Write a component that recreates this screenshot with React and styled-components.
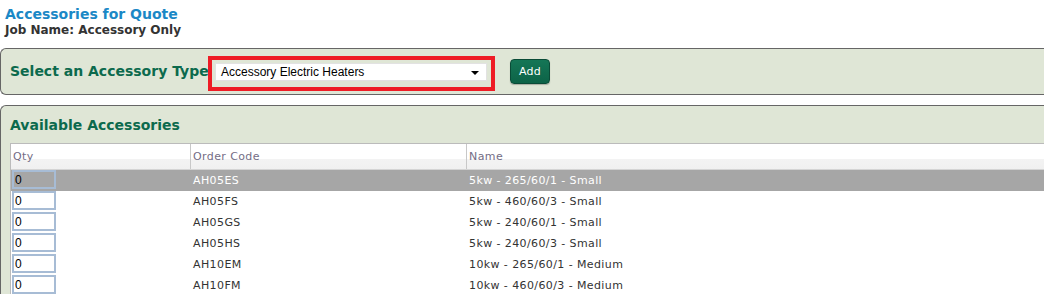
import React from "react";
import styled, { createGlobalStyle } from "styled-components";

const Global = createGlobalStyle`
  html, body { margin: 0; padding: 0; background: #fff; overflow: hidden; }
  body { font-family: "DejaVu Sans", Verdana, sans-serif; }
`;

const Page = styled.div`
  width: 1044px;
  height: 294px;
  overflow: hidden;
  padding-top: 6px;
  box-sizing: border-box;
`;

const Title = styled.h1`
  margin: 0;
  padding-left: 5px;
  font-size: 14px;
  line-height: 17px;
  font-weight: bold;
  color: #1b88c6;
`;

const SubTitle = styled.div`
  padding-left: 5px;
  font-size: 12px;
  line-height: 15px;
  font-weight: bold;
  color: #333;
`;

const Panel = styled.section`
  width: 1070px;
  background: #dfe6d6;
  border-top: 1px solid #666;
  border-bottom: 1px solid #666;
  border-left: 1px solid #666;
  border-radius: 6px 0 0 6px;
  box-sizing: border-box;
  margin-top: ${(p) => p.$mt || "0px"};
`;

const TypeBar = styled.div`
  display: flex;
  align-items: center;
  height: 45px;
  padding-left: 9px;
`;

const Heading = styled.h2`
  margin: 0;
  font-size: 14px;
  line-height: 17px;
  font-weight: bold;
  color: #0c6a4d;
  white-space: nowrap;
`;

const TypeLabel = styled(Heading)`
  flex: 0 0 198px;
  min-width: 0;
  overflow: visible;
`;

const Highlight = styled.div`
  position: relative;
  margin-top: 4px;
  border: 4px solid #ee1c25;
  padding: 3px 4px 6px 3px;
  width: 272px;
  background: #dfe6d6;
`;

const SelectBox = styled.div`
  display: flex;
  align-items: center;
  justify-content: space-between;
  height: 18px;
  background: #fff;
  border: 1px solid #e2e2e2;
  box-sizing: border-box;
  padding: 0 7px 0 5px;
  font-family: "Liberation Sans", Arial, sans-serif;
  font-size: 12px;
  color: #000;
`;

const Caret = styled.span`
  width: 0;
  height: 0;
  border-left: 4px solid transparent;
  border-right: 4px solid transparent;
  border-top: 4px solid #000;
  margin-top: 2px;
`;

const AddButton = styled.button`
  margin-left: 15px;
  width: 40px;
  height: 25px;
  border: 1px solid #0a4b37;
  border-radius: 4px;
  background: linear-gradient(#157656, #0d6347);
  color: #fff;
  font-family: "DejaVu Sans", Verdana, sans-serif;
  font-size: 11px;
  letter-spacing: 0.3px;
  padding: 0;
  box-shadow: 0 1px 1px rgba(0, 0, 0, 0.25);
`;

const ListPanel = styled(Panel)`
  padding: 11px 0 0 9px;
  height: 200px;
  border-bottom: none;
`;

const Table = styled.div`
  margin-top: 9px;
  border-top: 1px solid #bbb;
  border-left: 1px solid #bbb;
  background: #fff;
  font-size: 11px;
  letter-spacing: 0.4px;
  color: #333;
`;

const Row = styled.div`
  display: grid;
  grid-template-columns: 180px 276px 1fr;
  height: 21px;
  background: ${(p) => (p.$selected ? "#a6a6a6" : "#fff")};
  color: ${(p) => (p.$selected ? "#fff" : "#333")};
`;

const HeaderRow = styled(Row)`
  height: 26px;
  background: linear-gradient(#fff 0, #fff 15px, #f3f3f3 15px, #f0f0f0 25px);
  border-bottom: 1px solid #d4d4d4;
  box-sizing: border-box;
  color: #746d85;
`;

const HeadCell = styled.div`
  padding: 6px 0 0 2px;
  line-height: 13px;
  border-left: ${(p) => (p.$first ? "none" : "1px solid #c8c8c8")};
  margin-left: ${(p) => (p.$first ? "0" : "-1px")};
`;

const Cell = styled.div`
  line-height: 21px;
  padding-left: 2px;
  white-space: nowrap;
`;

const QtyCell = styled.div`
  padding: 0 0 0 1px;
  display: flex;
  align-items: flex-start;
`;

const QtyInput = styled.input`
  width: 44px;
  height: 19px;
  box-sizing: border-box;
  border: 2px solid #a7bcd5;
  background: ${(p) => (p.$selected ? "transparent" : "#fff")};
  font-family: "Liberation Sans", Arial, sans-serif;
  font-size: 12px;
  letter-spacing: 0;
  color: #000;
  padding: 0 0 0 1px;
  margin: 0;
  outline: none;
`;

const rows = [
  ["AH05ES", "5kw - 265/60/1 - Small"],
  ["AH05FS", "5kw - 460/60/3 - Small"],
  ["AH05GS", "5kw - 240/60/1 - Small"],
  ["AH05HS", "5kw - 240/60/3 - Small"],
  ["AH10EM", "10kw - 265/60/1 - Medium"],
  ["AH10FM", "10kw - 460/60/3 - Medium"],
  ["AH10GM", "10kw - 240/60/1 - Medium"],
];

export default function App() {
  return (
    <Page>
      <Global />
      <Title>Accessories for Quote</Title>
      <SubTitle>Job Name: Accessory Only</SubTitle>
      <Panel $mt="10px">
        <TypeBar>
          <TypeLabel>Select an Accessory Type:</TypeLabel>
          <Highlight>
            <SelectBox>
              <span>Accessory Electric Heaters</span>
              <Caret />
            </SelectBox>
          </Highlight>
          <AddButton>Add</AddButton>
        </TypeBar>
      </Panel>
      <ListPanel $mt="10px">
        <Heading>Available Accessories</Heading>
        <Table>
          <HeaderRow>
            <HeadCell $first>Qty</HeadCell>
            <HeadCell>Order Code</HeadCell>
            <HeadCell>Name</HeadCell>
          </HeaderRow>
          {rows.map(([code, name], i) => (
            <Row key={code} $selected={i === 0}>
              <QtyCell>
                <QtyInput $selected={i === 0} defaultValue="0" />
              </QtyCell>
              <Cell>{code}</Cell>
              <Cell>{name}</Cell>
            </Row>
          ))}
        </Table>
      </ListPanel>
    </Page>
  );
}
